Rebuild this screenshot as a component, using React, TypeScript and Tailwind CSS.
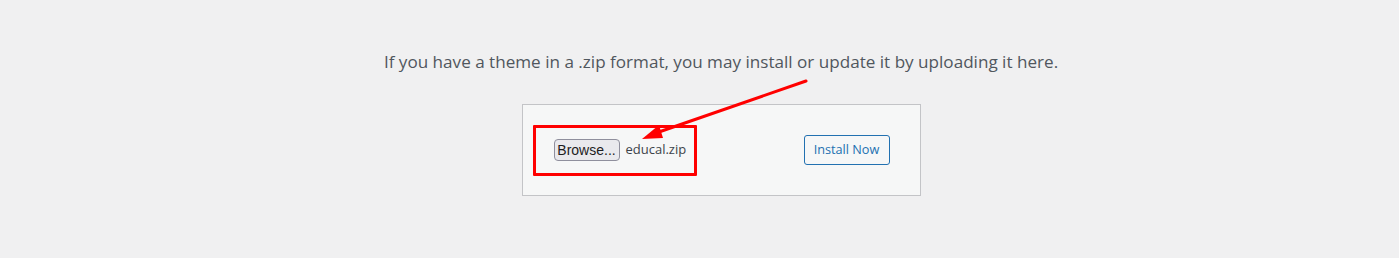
import React from "react";

function Arrow() {
  return (
    <svg
      className="absolute left-0 top-0 pointer-events-none"
      width="1399"
      height="258"
      viewBox="0 0 1399 258"
    >
      <line x1="806" y1="81" x2="656" y2="133" stroke="#ff0000" strokeWidth="3" strokeLinecap="round" />
      <polygon points="642,139 659,125 663,138" fill="#ff0000" />
    </svg>
  );
}

export default function App() {
  return (
    <div
      className="relative w-[1399px] h-[258px] bg-[#f0f0f1] overflow-hidden"
      style={{ fontFamily: '"Open Sans", "Noto Sans", sans-serif' }}
    >
      <div className="flex flex-col items-center pt-[49px] pl-[43px]">
        <p className="text-[17.1px] leading-[26px] text-[#50575e]">
          If you have a theme in a .zip format, you may install or update it by uploading it here.
        </p>
        <div className="relative mt-[29px] w-[399px] h-[92px] border border-[#c3c4c7] bg-[#f6f7f7] pl-[31px] pr-[30px] flex items-center justify-between">
          <div className="flex items-center gap-[6px]">
            <button
              className="h-[22px] w-[66px] rounded-[4px] border border-[#8f8f9d] bg-[#e9e9ed] text-[14px] text-[#1d1d1d] leading-none flex items-center justify-center"
              style={{ fontFamily: '"Liberation Sans", Arial, sans-serif' }}
            >
              Browse...
            </button>
            <span className="text-[13px] text-[#3c434a]">educal.zip</span>
          </div>
          <button className="h-[30px] w-[86px] rounded-[3px] border border-[#2271b1] bg-[#f6f7f7] text-[12.7px] text-[#2271b1] flex items-center justify-center">
            Install Now
          </button>
          <div className="absolute left-[10px] top-[20px] w-[164px] h-[51px] border-[3px] border-[#ff0000] rounded-[1px] pointer-events-none" />
        </div>
      </div>
      <Arrow />
    </div>
  );
}
